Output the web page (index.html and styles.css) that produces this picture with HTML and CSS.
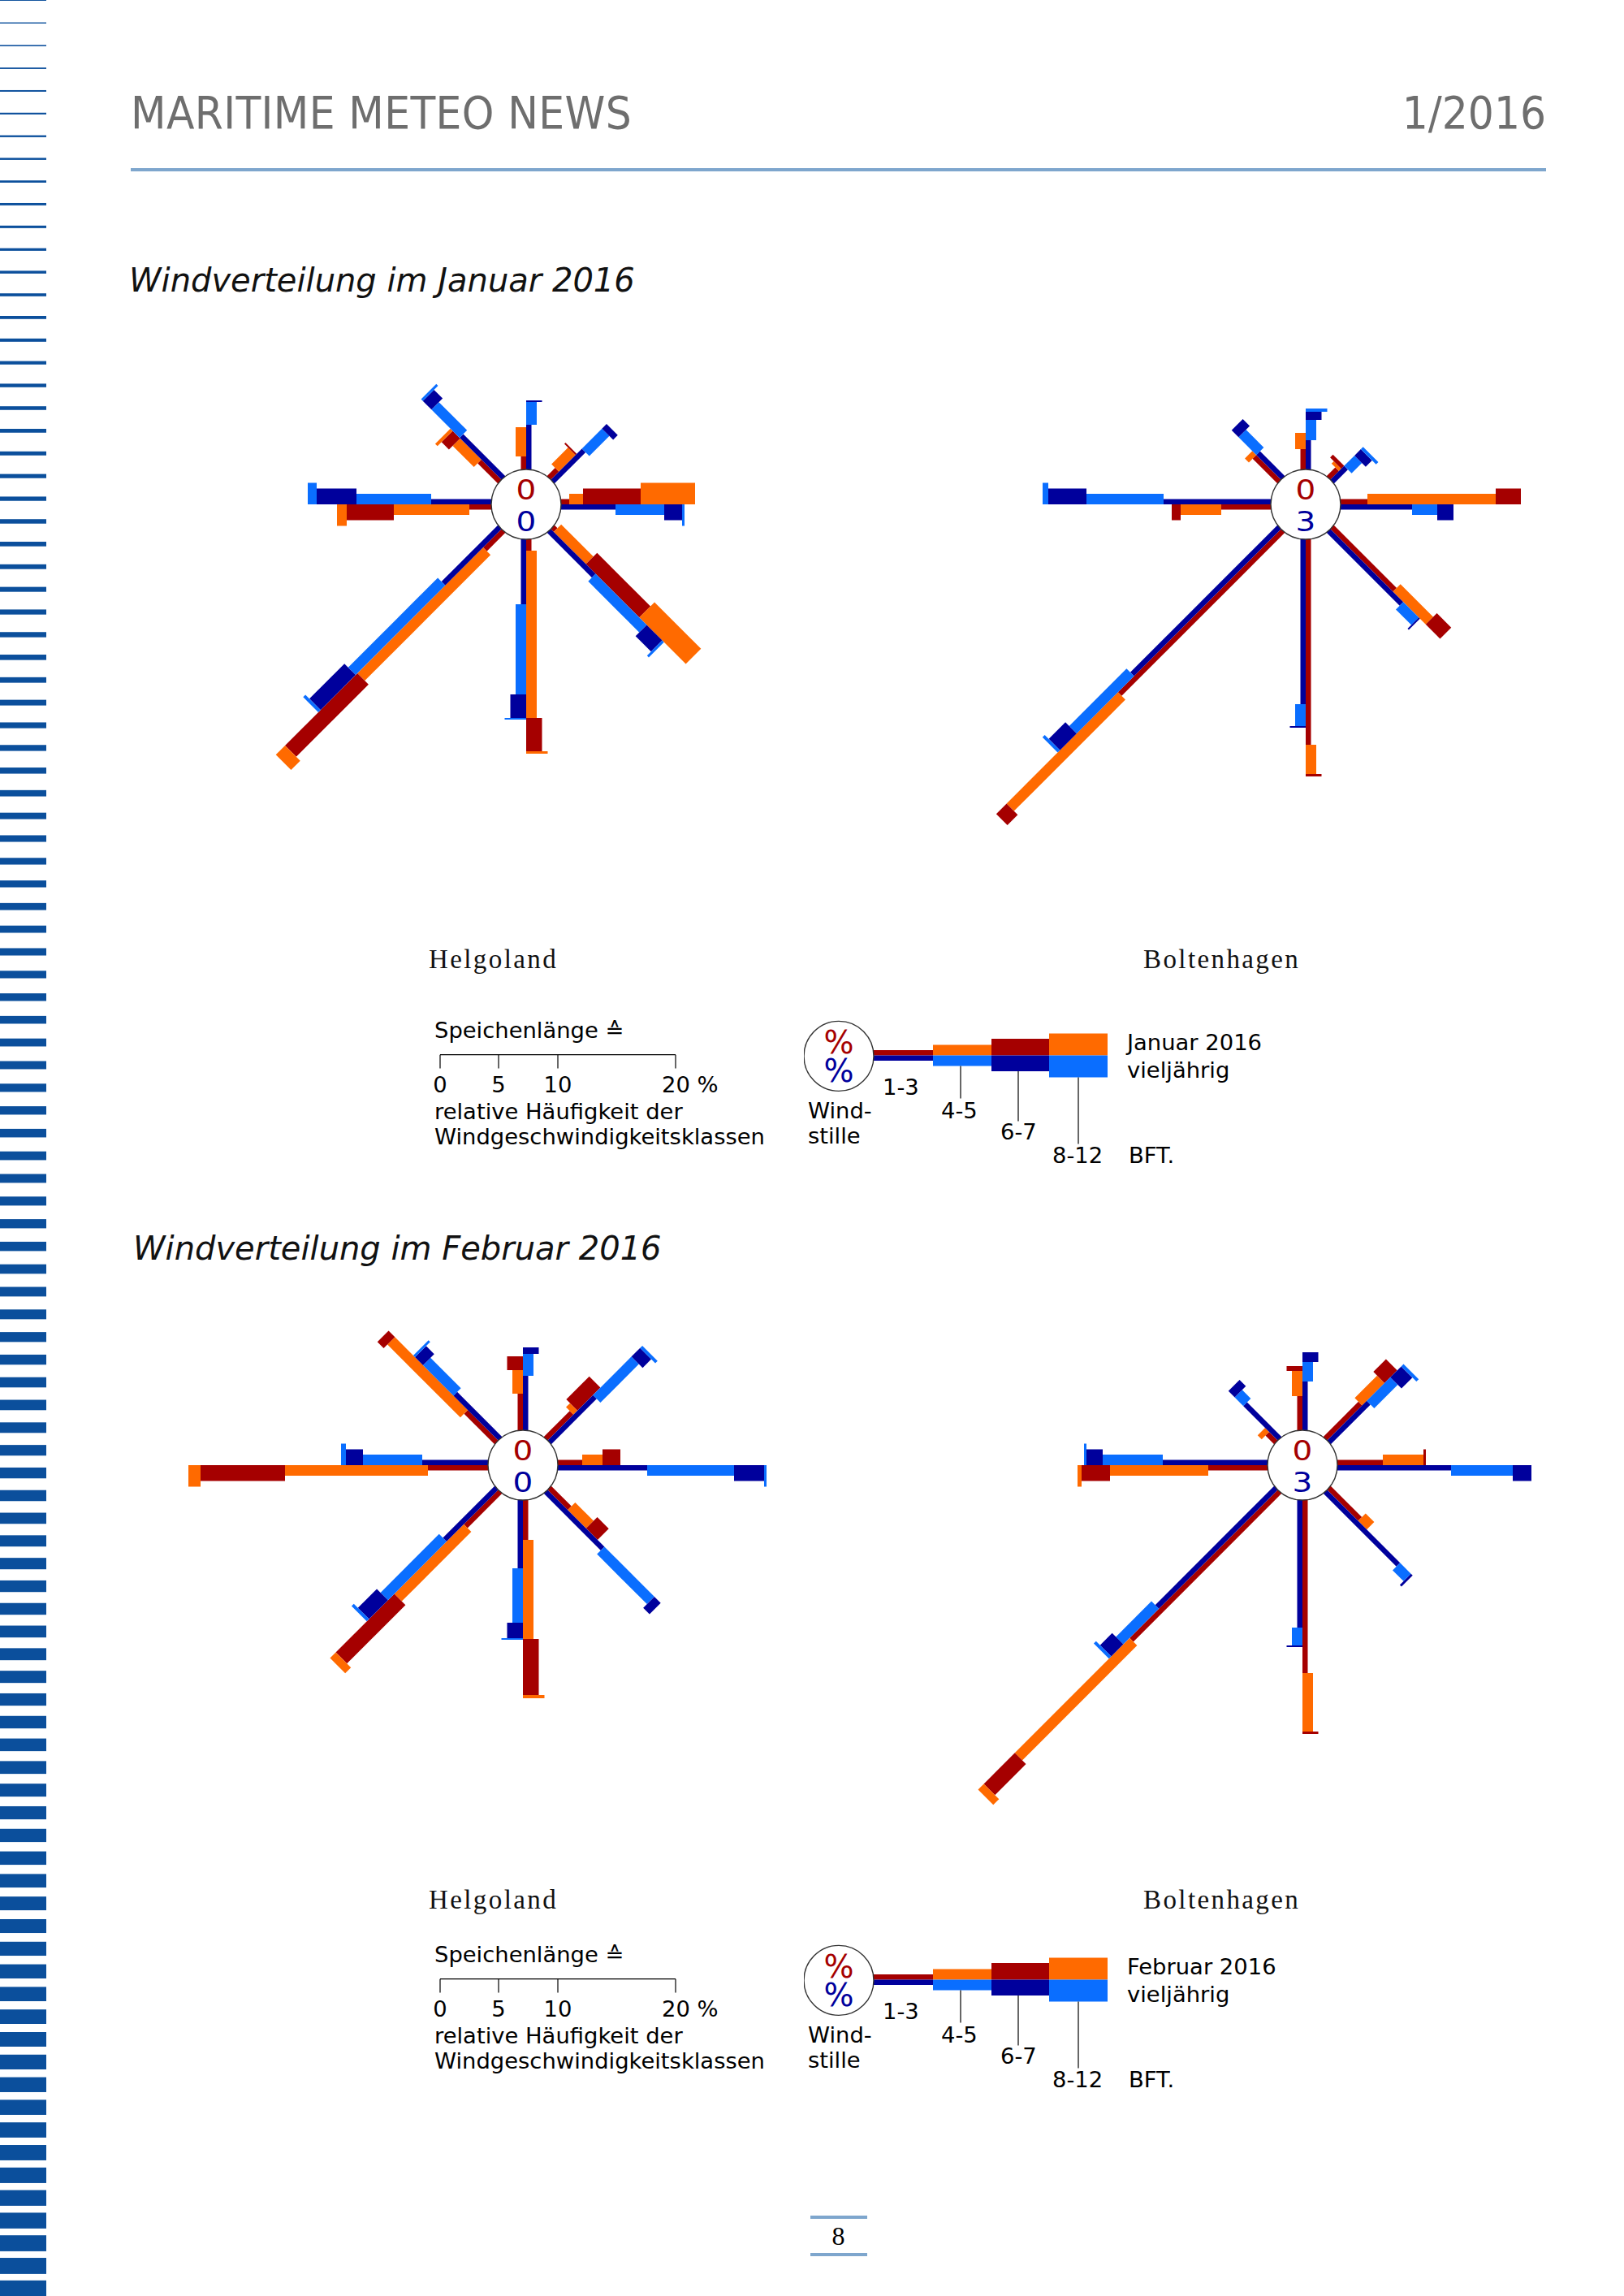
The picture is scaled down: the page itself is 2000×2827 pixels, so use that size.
FILE: index.html
```html
<!DOCTYPE html>
<html lang="de">
<head>
<meta charset="utf-8">
<title>Maritime Meteo News 1/2016 – Windverteilung</title>
<link rel="stylesheet" href="styles.css">
</head>
<body>
<div class="page">
  <aside class="edge"><svg id="edge-stripes" class="edge__svg" width="57" height="2827" viewBox="0 0 57 2827"></svg></aside>
  <main class="content">
    <header class="masthead">
      <span class="masthead__title">MARITIME METEO NEWS</span>
      <span class="masthead__issue">1/2016</span>
    </header>

    <section class="wind wind--jan">
      <h2 class="wind__title">Windverteilung im Januar 2016</h2>
      <div class="roses">
        <svg class="rose" width="880" height="700" viewBox="0 0 880 700">
          <g class="rose__spokes" data-rose="janHel" transform="translate(487 256)"></g>
          <g class="rose__hub" transform="translate(487 256)">
            <circle r="43"></circle>
            <g transform="scale(1.18 1)">
              <text class="hub-top" y="-6">0</text>
              <text class="hub-bottom" y="33">0</text>
            </g>
          </g>
        </svg>
        <svg class="rose" width="863" height="700" viewBox="0 0 863 700">
          <g class="rose__spokes" data-rose="janBol" transform="translate(567 256)"></g>
          <g class="rose__hub" transform="translate(567 256)">
            <circle r="43"></circle>
            <g transform="scale(1.18 1)">
              <text class="hub-top" y="-6">0</text>
              <text class="hub-bottom" y="33">3</text>
            </g>
          </g>
        </svg>
      </div>
      <div class="stations"><span>Helgoland</span><span>Boltenhagen</span></div>
      <div class="legend">
        <div class="legend__scale">
          <div class="legend__heading">Speichenlänge ≙</div>
          <svg class="legend__ruler" width="376" height="68" viewBox="-16 0 376 68">
            <line class="ink" x1="7" y1="13.7" x2="297" y2="13.7"></line>
            <line class="ink" x1="7" y1="13.7" x2="7" y2="30.4"></line>
            <line class="ink" x1="79" y1="13.7" x2="79" y2="30.4"></line>
            <line class="ink" x1="152" y1="13.7" x2="152" y2="30.4"></line>
            <line class="ink" x1="297" y1="13.7" x2="297" y2="30.4"></line>
            <text class="mid" x="7" y="60.4">0</text>
            <text class="mid" x="79" y="60.4">5</text>
            <text class="mid" x="152" y="60.4">10</text>
            <text x="280" y="60.4">20 %</text>
          </svg>
          <p class="legend__caption">relative Häufigkeit der<br>Windgeschwindigkeitsklassen</p>
        </div>
        <svg class="legend__classes" width="640" height="190" viewBox="0 0 640 190">
          <rect class="c-dred" x="86" y="40" width="73" height="6.5"></rect>
          <rect class="c-navy" x="86" y="46.5" width="73" height="6.5"></rect>
          <rect class="c-orange" x="159" y="33.5" width="72" height="13"></rect>
          <rect class="c-lblue" x="159" y="46.5" width="72" height="13"></rect>
          <rect class="c-dred" x="231" y="26" width="71" height="20.5"></rect>
          <rect class="c-navy" x="231" y="46.5" width="71" height="19.5"></rect>
          <rect class="c-orange" x="302" y="19.5" width="72" height="27"></rect>
          <rect class="c-lblue" x="302" y="46.5" width="72" height="27"></rect>
          <circle class="legend__calm" cx="43" cy="47.4" r="43"></circle>
          <text class="pct pct--red" x="43" y="44.4">%</text>
          <text class="pct pct--blue" x="43" y="79.4">%</text>
          <line class="ink" x1="193" y1="59.5" x2="193" y2="99.4"></line>
          <line class="ink" x1="264" y1="66" x2="264" y2="127.4"></line>
          <line class="ink" x1="338" y1="73.5" x2="338" y2="155.4"></line>
          <text x="97" y="95.4">1-3</text>
          <text x="169" y="124.4">4-5</text>
          <text x="242" y="150.4">6-7</text>
          <text x="306" y="179.4">8-12</text>
          <text x="400" y="179.4">BFT.</text>
          <text x="5" y="124.4">Wind-</text>
          <text x="5" y="155.4">stille</text>
          <text x="398" y="40.4">Januar 2016</text>
          <text x="398" y="74.4">vieljährig</text>
        </svg>
      </div>
    </section>

    <section class="wind wind--feb">
      <h2 class="wind__title">Windverteilung im Februar 2016</h2>
      <div class="roses">
        <svg class="rose" width="880" height="700" viewBox="0 0 880 700">
          <g class="rose__spokes" data-rose="febHel" transform="translate(483 247)"></g>
          <g class="rose__hub" transform="translate(483 247)">
            <circle r="43"></circle>
            <g transform="scale(1.18 1)">
              <text class="hub-top" y="-6">0</text>
              <text class="hub-bottom" y="33">0</text>
            </g>
          </g>
        </svg>
        <svg class="rose" width="863" height="700" viewBox="0 0 863 700">
          <g class="rose__spokes" data-rose="febBol" transform="translate(563 247)"></g>
          <g class="rose__hub" transform="translate(563 247)">
            <circle r="43"></circle>
            <g transform="scale(1.18 1)">
              <text class="hub-top" y="-6">0</text>
              <text class="hub-bottom" y="33">3</text>
            </g>
          </g>
        </svg>
      </div>
      <div class="stations"><span>Helgoland</span><span>Boltenhagen</span></div>
      <div class="legend">
        <div class="legend__scale">
          <div class="legend__heading">Speichenlänge ≙</div>
          <svg class="legend__ruler" width="376" height="68" viewBox="-16 0 376 68">
            <line class="ink" x1="7" y1="13.7" x2="297" y2="13.7"></line>
            <line class="ink" x1="7" y1="13.7" x2="7" y2="30.4"></line>
            <line class="ink" x1="79" y1="13.7" x2="79" y2="30.4"></line>
            <line class="ink" x1="152" y1="13.7" x2="152" y2="30.4"></line>
            <line class="ink" x1="297" y1="13.7" x2="297" y2="30.4"></line>
            <text class="mid" x="7" y="60.4">0</text>
            <text class="mid" x="79" y="60.4">5</text>
            <text class="mid" x="152" y="60.4">10</text>
            <text x="280" y="60.4">20 %</text>
          </svg>
          <p class="legend__caption">relative Häufigkeit der<br>Windgeschwindigkeitsklassen</p>
        </div>
        <svg class="legend__classes" width="640" height="190" viewBox="0 0 640 190">
          <rect class="c-dred" x="86" y="40" width="73" height="6.5"></rect>
          <rect class="c-navy" x="86" y="46.5" width="73" height="6.5"></rect>
          <rect class="c-orange" x="159" y="33.5" width="72" height="13"></rect>
          <rect class="c-lblue" x="159" y="46.5" width="72" height="13"></rect>
          <rect class="c-dred" x="231" y="26" width="71" height="20.5"></rect>
          <rect class="c-navy" x="231" y="46.5" width="71" height="19.5"></rect>
          <rect class="c-orange" x="302" y="19.5" width="72" height="27"></rect>
          <rect class="c-lblue" x="302" y="46.5" width="72" height="27"></rect>
          <circle class="legend__calm" cx="43" cy="47.4" r="43"></circle>
          <text class="pct pct--red" x="43" y="44.4">%</text>
          <text class="pct pct--blue" x="43" y="79.4">%</text>
          <line class="ink" x1="193" y1="59.5" x2="193" y2="99.4"></line>
          <line class="ink" x1="264" y1="66" x2="264" y2="127.4"></line>
          <line class="ink" x1="338" y1="73.5" x2="338" y2="155.4"></line>
          <text x="97" y="95.4">1-3</text>
          <text x="169" y="124.4">4-5</text>
          <text x="242" y="150.4">6-7</text>
          <text x="306" y="179.4">8-12</text>
          <text x="400" y="179.4">BFT.</text>
          <text x="5" y="124.4">Wind-</text>
          <text x="5" y="155.4">stille</text>
          <text x="398" y="40.4">Februar 2016</text>
          <text x="398" y="74.4">vieljährig</text>
        </svg>
      </div>
    </section>

    <footer class="folio">8</footer>
  </main>
</div>
<script src="script.js"></script>
</body>
</html>
```

FILE: styles.css
```css
* { box-sizing: border-box; }

html, body {
  margin: 0;
  padding: 0;
  background: #ffffff;
}

body {
  width: 2000px;
  font-family: "DejaVu Sans", "Liberation Sans", sans-serif;
  color: #000000;
}

.page {
  display: flex;
  width: 2000px;
  min-height: 2827px;
}

/* left decorative edge */
.edge {
  flex: 0 0 57px;
  line-height: 0;
}
.edge__svg { display: block; }
.stripe { fill: #0b4f9c; }

/* content column */
.content {
  flex: 1;
  display: flex;
  flex-direction: column;
  min-height: 2827px;
  padding: 0 96px 49px 104px;
}

.masthead {
  display: flex;
  justify-content: space-between;
  align-items: baseline;
  padding: 111px 0 40px;
  border-bottom: 4px solid #7ea6cd;
  font-family: "DejaVu Sans Condensed", "DejaVu Sans", sans-serif;
  font-size: 56px;
  line-height: 56px;
  color: #6e6e6e;
}
.masthead__title { letter-spacing: 0.4px; }

/* sections */
.wind--jan { margin-top: 114px; }
.wind--feb { margin-top: 74px; }

.wind__title {
  margin: 0;
  font-family: "DejaVu Sans", sans-serif;
  font-size: 40px;
  line-height: 40px;
  font-weight: normal;
  font-style: italic;
  color: #111111;
}
.wind--jan .wind__title { margin-left: -2px; }
.wind--feb .wind__title { margin-left: 3px; }

.roses {
  display: grid;
  grid-template-columns: 880px 863px;
}
.rose { display: block; }

.c-dred { fill: #a50000; }
.c-orange { fill: #ff6a00; }
.c-navy { fill: #00009c; }
.c-lblue { fill: #0a6eff; }

.rose__hub circle {
  fill: #ffffff;
  stroke: #333333;
  stroke-width: 1.4;
}
.rose__hub text {
  font-family: "DejaVu Sans", sans-serif;
  font-size: 33px;
  font-weight: normal;
  text-anchor: middle;
}
.hub-top { fill: #a50000; }
.hub-bottom { fill: #00009c; }

.stations {
  display: grid;
  grid-template-columns: 880px 863px;
  font-family: "Liberation Serif", "Times New Roman", serif;
  font-size: 33px;
  line-height: 40px;
  letter-spacing: 2.4px;
  color: #111111;
}
.stations span { padding-left: 367px; }
.wind--jan .stations { margin-top: 96px; }
.wind--feb .stations { margin-top: 62px; }

/* legend */
.legend {
  display: flex;
  align-items: flex-start;
  padding-left: 374px;
  font-size: 27.4px;
}
.wind--jan .legend { margin-top: 52px; }
.wind--feb .legend { margin-top: 32px; }

.legend__scale { flex: 0 0 455px; }
.legend__heading { line-height: 32px; white-space: nowrap; }
.legend__ruler {
  display: block;
  margin-left: -16px;
}
.legend__caption {
  margin: 0;
  line-height: 31px;
  white-space: nowrap;
}

.legend__classes {
  display: block;
  flex: none;
}

.legend svg text {
  font-family: "DejaVu Sans", sans-serif;
  font-size: 27.4px;
  fill: #000000;
}
.legend svg text.mid { text-anchor: middle; }
.legend svg text.pct {
  font-size: 39px;
  text-anchor: middle;
}
.legend svg text.pct--red { fill: #a50000; }
.legend svg text.pct--blue { fill: #00009c; }

.ink {
  stroke: #000000;
  stroke-width: 1.2;
}
.legend__calm {
  fill: #ffffff;
  stroke: #333333;
  stroke-width: 1.4;
}

/* page number */
.folio {
  margin-top: auto;
  align-self: center;
  width: 70px;
  border-top: 4px solid #7ea6cd;
  border-bottom: 4px solid #7ea6cd;
  text-align: center;
  font-family: "Liberation Serif", "Times New Roman", serif;
  font-size: 32px;
  line-height: 42px;
}
```

FILE: script.js
```js
(function () {
  var NS = 'http://www.w3.org/2000/svg';

  function rect(cls, x, y, w, h) {
    var r = document.createElementNS(NS, 'rect');
    r.setAttribute('class', cls);
    r.setAttribute('x', x);
    r.setAttribute('y', y);
    r.setAttribute('width', w);
    r.setAttribute('height', h);
    return r;
  }

  /* left edge stripes: thickness grows down the page */
  var edge = document.getElementById('edge-stripes');
  for (var k = 0; k <= 102; k++) {
    var y = k * 27.84;
    var t = 1.2 + 0.0067 * y;
    edge.appendChild(rect('stripe', 0, (y - 0.2 * t).toFixed(2), 57, t.toFixed(2)));
  }

  /* wind roses: spokes in order E, SE, S, SW, W, NW, N, NE
     each spoke: [current month cumulative radii], [long-term cumulative radii]
     for classes 1-3, 4-5, 6-7, 8-12 Bft */
  var ROSES = {
    janHel: [
      [[53, 70, 141, 208], [110, 170, 192, 195]],
      [[48, 104, 197, 278], [121, 210, 237, 240]],
      [[57, 263, 304, 307], [123, 234, 263, 265]],
      [[75, 294, 420, 436], [141, 297, 358, 362]],
      [[70, 163, 221, 233], [117, 209, 258, 269]],
      [[78, 115, 128, 132], [116, 165, 180, 183]],
      [[59, 95, 95, 95], [98, 126, 128, 128]],
      [[57, 86, 88, 88], [97, 132, 140, 140]]
    ],
    janBol: [
      [[76, 234, 265, 265], [131, 162, 182, 182]],
      [[152, 209, 234, 234], [170, 197, 199, 199]],
      [[296, 332, 335, 335], [246, 273, 275, 275]],
      [[327, 521, 539, 539], [299, 399, 428, 432]],
      [[104, 154, 165, 165], [175, 270, 317, 324]],
      [[86, 93, 93, 93], [86, 117, 129, 129]],
      [[68, 88, 88, 88], [79, 104, 114, 118]],
      [[58, 62, 67, 67], [67, 85, 96, 100]]
    ],
    febHel: [
      [[73, 98, 120, 120], [153, 260, 297, 300]],
      [[78, 110, 130, 130], [142, 229, 240, 240]],
      [[92, 214, 283, 287], [127, 194, 213, 215]],
      [[103, 224, 326, 336], [133, 235, 268, 272]],
      [[117, 293, 397, 412], [124, 197, 218, 224]],
      [[96, 223, 234, 234], [121, 174, 188, 191]],
      [[88, 117, 134, 134], [110, 137, 145, 145]],
      [[88, 95, 135, 135], [122, 189, 204, 208]]
    ],
    febBol: [
      [[99, 149, 152, 152], [183, 259, 282, 282]],
      [[97, 112, 112, 112], [170, 189, 192, 192]],
      [[256, 328, 331, 331], [200, 222, 224, 224]],
      [[301, 501, 555, 565], [250, 312, 333, 337]],
      [[116, 237, 272, 277], [172, 246, 266, 269]],
      [[58, 65, 65, 65], [103, 118, 129, 129]],
      [[85, 116, 122, 122], [103, 127, 139, 139]],
      [[104, 143, 165, 165], [112, 153, 172, 176]]
    ]
  };

  var ANG = [0, 45, 90, 135, 180, 225, 270, 315];
  var W = [6.5, 13, 19.5, 26.5];
  var RC = ['c-dred', 'c-orange', 'c-dred', 'c-orange'];
  var BC = ['c-navy', 'c-lblue', 'c-navy', 'c-lblue'];

  var groups = document.querySelectorAll('.rose__spokes');
  for (var gi = 0; gi < groups.length; gi++) {
    var g = groups[gi];
    var data = ROSES[g.getAttribute('data-rose')];
    if (!data) continue;
    for (var i = 0; i < data.length; i++) {
      var sg = document.createElementNS(NS, 'g');
      sg.setAttribute('transform', 'rotate(' + ANG[i] + ')');
      for (var side = 0; side < 2; side++) {
        var arr = data[i][side];
        var prev = 0;
        for (var c = 0; c < 4; c++) {
          var len = arr[c] - prev;
          if (len > 0) {
            sg.appendChild(rect(side === 0 ? RC[c] : BC[c], prev, side === 0 ? -W[c] : 0, len, W[c]));
          }
          prev = Math.max(prev, arr[c]);
        }
      }
      g.appendChild(sg);
    }
  }
})();
```
